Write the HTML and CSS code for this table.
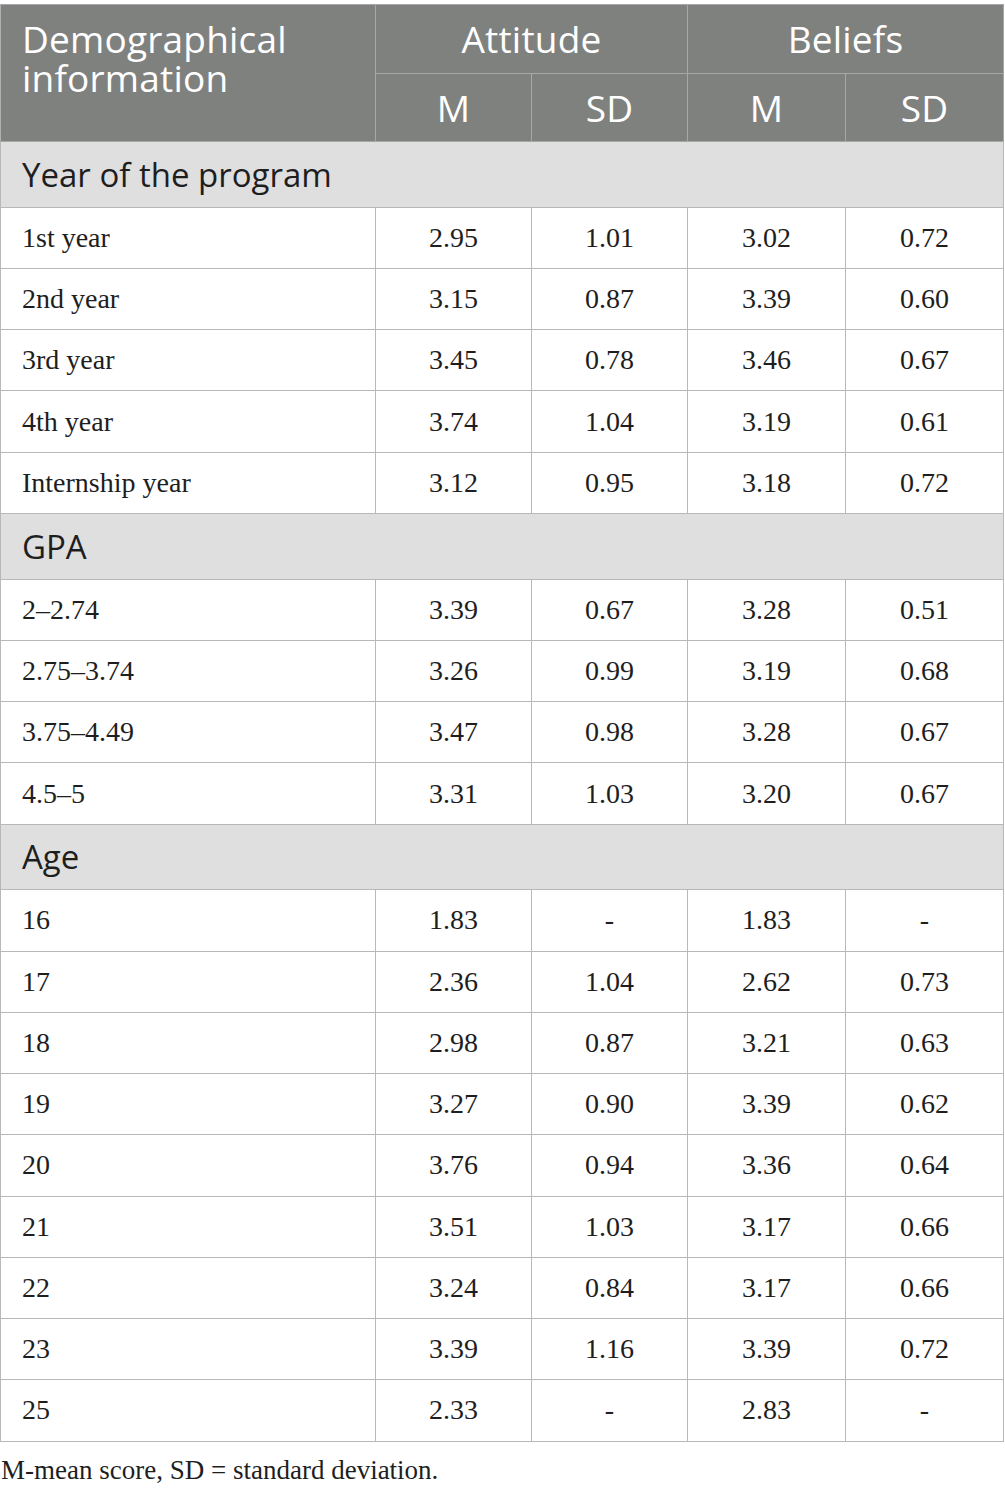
FILE: index.html
```html
<!DOCTYPE html>
<html lang="en">
<head>
    <meta charset="UTF-8">
    <title>Demographical information table</title>
    <link rel="stylesheet" href="styles.css">
</head>
<body>
    <table class="data-table">
        <colgroup>
            <col class="col-label">
            <col class="col-num">
            <col class="col-num">
            <col class="col-num2">
            <col class="col-num2">
        </colgroup>
        <thead>
            <tr class="head-top">
                <th class="head-label" rowspan="2">Demographical information</th>
                <th colspan="2">Attitude</th>
                <th colspan="2">Beliefs</th>
            </tr>
            <tr class="head-sub">
                <th>M</th>
                <th>SD</th>
                <th>M</th>
                <th>SD</th>
            </tr>
        </thead>
        <tbody>
            <tr class="section"><td colspan="5">Year of the program</td></tr>
            <tr><td>1st year</td><td>2.95</td><td>1.01</td><td>3.02</td><td>0.72</td></tr>
            <tr><td>2nd year</td><td>3.15</td><td>0.87</td><td>3.39</td><td>0.60</td></tr>
            <tr><td>3rd year</td><td>3.45</td><td>0.78</td><td>3.46</td><td>0.67</td></tr>
            <tr><td>4th year</td><td>3.74</td><td>1.04</td><td>3.19</td><td>0.61</td></tr>
            <tr><td>Internship year</td><td>3.12</td><td>0.95</td><td>3.18</td><td>0.72</td></tr>

            <tr class="section"><td colspan="5">GPA</td></tr>
            <tr><td>2–2.74</td><td>3.39</td><td>0.67</td><td>3.28</td><td>0.51</td></tr>
            <tr><td>2.75–3.74</td><td>3.26</td><td>0.99</td><td>3.19</td><td>0.68</td></tr>
            <tr><td>3.75–4.49</td><td>3.47</td><td>0.98</td><td>3.28</td><td>0.67</td></tr>
            <tr><td>4.5–5</td><td>3.31</td><td>1.03</td><td>3.20</td><td>0.67</td></tr>

            <tr class="section"><td colspan="5">Age</td></tr>
            <tr><td>16</td><td>1.83</td><td>-</td><td>1.83</td><td>-</td></tr>
            <tr><td>17</td><td>2.36</td><td>1.04</td><td>2.62</td><td>0.73</td></tr>
            <tr><td>18</td><td>2.98</td><td>0.87</td><td>3.21</td><td>0.63</td></tr>
            <tr><td>19</td><td>3.27</td><td>0.90</td><td>3.39</td><td>0.62</td></tr>
            <tr><td>20</td><td>3.76</td><td>0.94</td><td>3.36</td><td>0.64</td></tr>
            <tr><td>21</td><td>3.51</td><td>1.03</td><td>3.17</td><td>0.66</td></tr>
            <tr><td>22</td><td>3.24</td><td>0.84</td><td>3.17</td><td>0.66</td></tr>
            <tr><td>23</td><td>3.39</td><td>1.16</td><td>3.39</td><td>0.72</td></tr>
            <tr><td>25</td><td>2.33</td><td>-</td><td>2.83</td><td>-</td></tr>
        </tbody>
    </table>
    <p class="footnote">M-mean score, SD = standard deviation.</p>
</body>
</html>
```

FILE: styles.css
```css
body {
    margin: 0;
    padding-top: 4px;
    background: #ffffff;
    font-family: "Liberation Serif", "Times New Roman", serif;
    color: #1e1e1e;
}

.data-table {
    width: 1004px;
    border-collapse: collapse;
    table-layout: fixed;
}

.col-label { width: 375px; }
.col-num { width: 156px; }
.col-num2 { width: 158px; }

/* Header */
.data-table th {
    background: #7f817f;
    color: #ffffff;
    font-family: "Open Sans", "DejaVu Sans", sans-serif;
    font-weight: 400;
    font-size: 37px;
    letter-spacing: 0.2px;
    text-align: center;
    border: 1px solid #a6a7a6;
    height: 67.5px;
    padding: 0;
    line-height: 39px;
}

.data-table th.head-label {
    text-align: left;
    vertical-align: top;
    padding: 14px 20px 0 21px;
    border-left-color: #b0b0b0;
}

/* Section rows */
.data-table .section td {
    background: #e0dfe0;
    font-family: "Open Sans", "DejaVu Sans", sans-serif;
    font-size: 33px;
    color: #1e1e1e;
    text-align: left;
    height: 64.7px;
    padding: 0 21px;
}

/* Body cells */
.data-table td {
    border: 1px solid #b8b8b8;
    font-size: 28px;
    height: 60.25px;
    padding: 0;
    text-align: center;
    vertical-align: middle;
}

.data-table td:first-child {
    text-align: left;
    padding-left: 21px;
}

.footnote {
    margin: 13px 0 0 1px;
    font-size: 27px;
    color: #1e1e1e;
}
```
